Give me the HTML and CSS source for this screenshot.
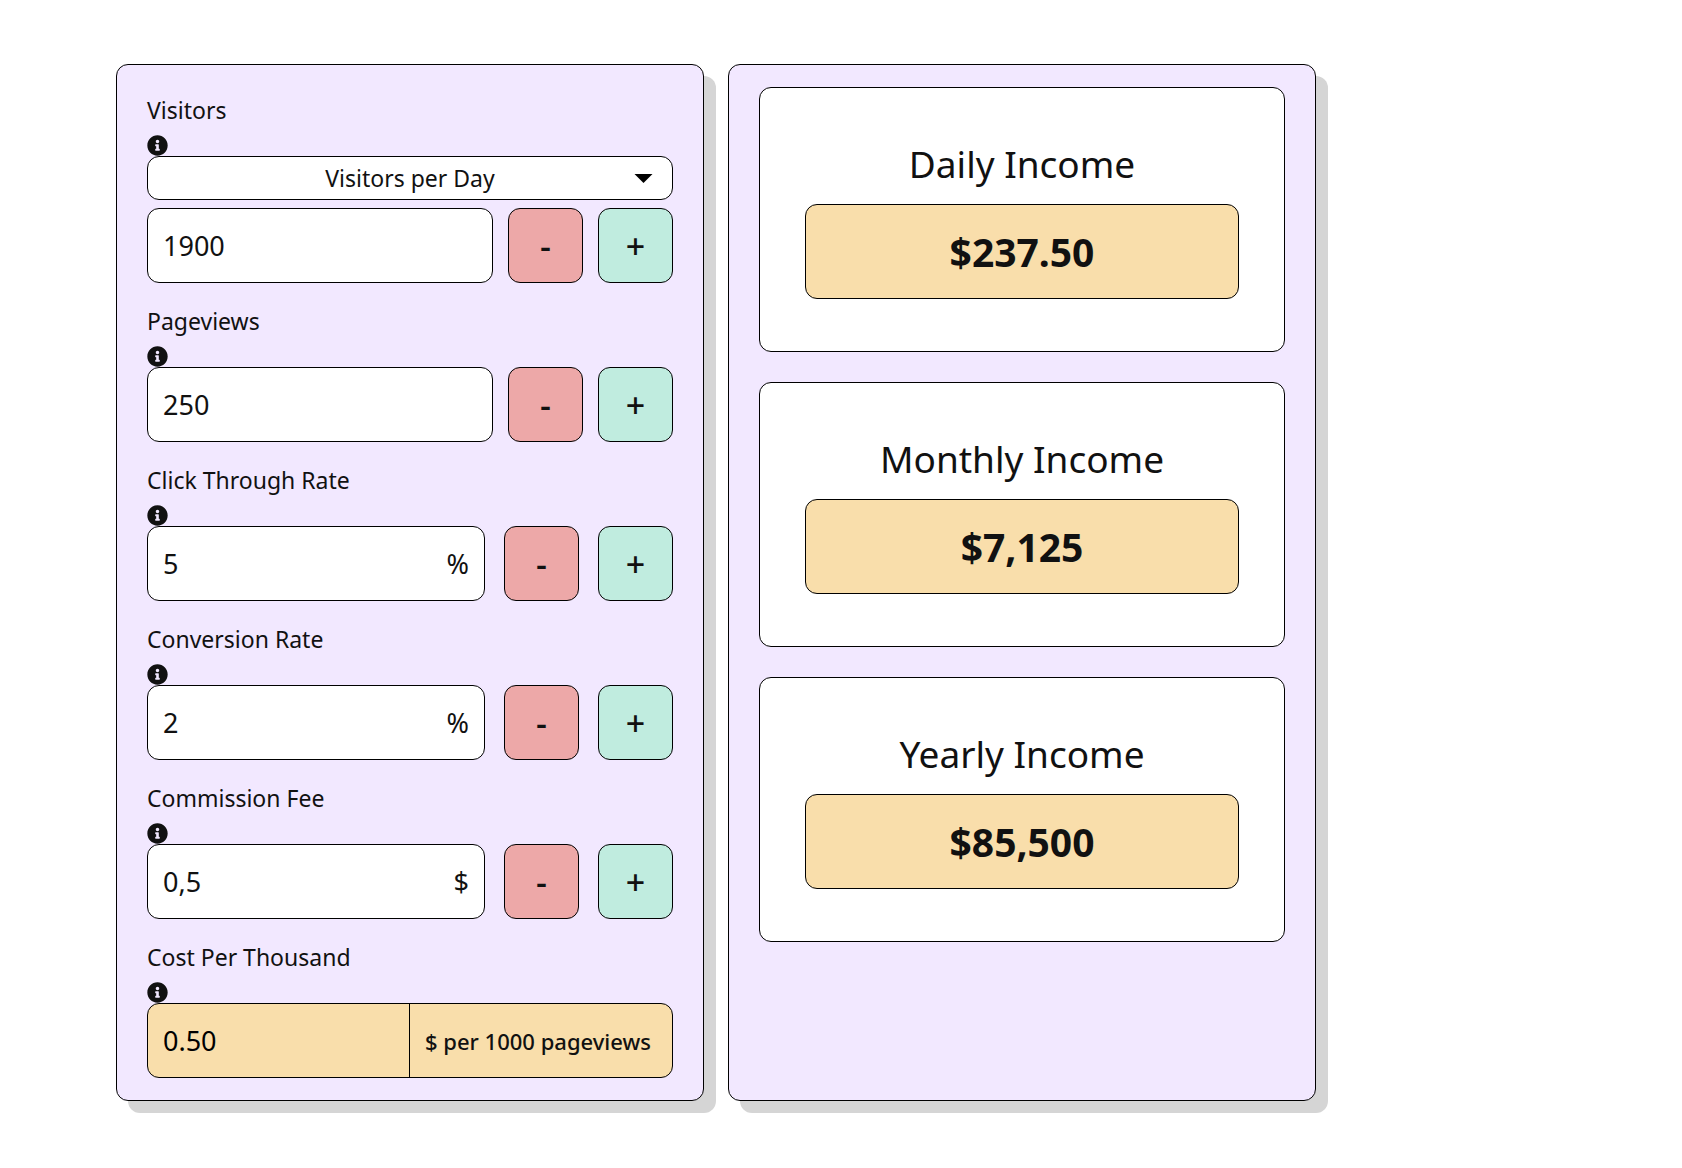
FILE: index.html
```html
<!DOCTYPE html>
<html lang="en">
<head>
    <meta charset="UTF-8">
    <meta name="viewport" content="width=device-width, initial-scale=1.0">
    <title>Income Calculator</title>

    <!-- css file link -->
    <link rel="stylesheet" href="styles.css">
</head>
<body>

    <!-- info icon, reused by every field -->
    <svg class="icon-defs" aria-hidden="true">
        <symbol id="info" viewBox="0 0 512 512">
            <path d="M256 8C119 8 8 119 8 256s111 248 248 248 248-111 248-248S393 8 256 8zm0 110c23 0 42 19 42 42s-19 42-42 42-42-19-42-42 19-42 42-42zm56 254c0 7-5 12-12 12h-88c-7 0-12-5-12-12v-24c0-7 5-12 12-12h12v-64h-12c-7 0-12-5-12-12v-24c0-7 5-12 12-12h64c7 0 12 5 12 12v100h12c7 0 12 5 12 12v24z"/>
        </symbol>
    </svg>

    <main class="calculator">
        <!-- input panel -->
        <form class="panel form">
            <div class="field">
                <label class="label" for="visitors">Visitors</label>
                <svg class="info"><use href="#info"/></svg>
                <div class="select">
                    <select id="period" aria-label="Visitors period">
                        <option>Visitors per Day</option>
                        <option>Visitors per Month</option>
                    </select>
                    <svg class="arrow" viewBox="0 0 18 9"><path d="M0 0h18L9 9z"/></svg>
                </div>
                <div class="row">
                    <input class="box" type="text" id="visitors" value="1900">
                    <button type="button" class="step minus">-</button>
                    <button type="button" class="step plus">+</button>
                </div>
            </div>

            <div class="field">
                <label class="label" for="pageviews">Pageviews</label>
                <svg class="info"><use href="#info"/></svg>
                <div class="row">
                    <input class="box" type="text" id="pageviews" value="250">
                    <button type="button" class="step minus">-</button>
                    <button type="button" class="step plus">+</button>
                </div>
            </div>

            <div class="field">
                <label class="label" for="ctr">Click Through Rate</label>
                <svg class="info"><use href="#info"/></svg>
                <div class="row wide">
                    <div class="box unit-box">
                        <input type="text" id="ctr" value="5">
                        <span>%</span>
                    </div>
                    <button type="button" class="step minus">-</button>
                    <button type="button" class="step plus">+</button>
                </div>
            </div>

            <div class="field">
                <label class="label" for="conversion">Conversion Rate</label>
                <svg class="info"><use href="#info"/></svg>
                <div class="row wide">
                    <div class="box unit-box">
                        <input type="text" id="conversion" value="2">
                        <span>%</span>
                    </div>
                    <button type="button" class="step minus">-</button>
                    <button type="button" class="step plus">+</button>
                </div>
            </div>

            <div class="field">
                <label class="label" for="fee">Commission Fee</label>
                <svg class="info"><use href="#info"/></svg>
                <div class="row wide">
                    <div class="box unit-box">
                        <input type="text" id="fee" value="0,5">
                        <span>$</span>
                    </div>
                    <button type="button" class="step minus">-</button>
                    <button type="button" class="step plus">+</button>
                </div>
            </div>

            <div class="field">
                <label class="label" for="cpm">Cost Per Thousand</label>
                <svg class="info"><use href="#info"/></svg>
                <div class="cpm">
                    <input type="text" id="cpm" value="0.50" readonly>
                    <span class="cpm-text">$ per 1000 pageviews</span>
                </div>
            </div>
        </form>

        <!-- results panel -->
        <section class="panel results">
            <div class="card">
                <h2>Daily Income</h2>
                <div class="value">$237.50</div>
            </div>
            <div class="card">
                <h2>Monthly Income</h2>
                <div class="value">$7,125</div>
            </div>
            <div class="card">
                <h2>Yearly Income</h2>
                <div class="value">$85,500</div>
            </div>
        </section>
    </main>

</body>
</html>
```
FILE: styles.css
```css
*{
    margin: 0;
    padding: 0;
    box-sizing: border-box;
}
body{
    font-family: "Noto Sans", sans-serif;
    color: #111;
    background: #fff;
}
input,select,button{
    font-family: inherit;
    color: inherit;
}
.icon-defs{
    display: none;
}
.calculator{
    display: grid;
    grid-template-columns: repeat(2, minmax(0, 1fr));
    gap: 24px;
    max-width: 1200px;
    margin: 64px 116px;
}
.panel{
    display: flex;
    flex-direction: column;
    padding: 22px 30px;
    background: #f2e8ff;
    border: 1px solid #000;
    border-radius: 12px;
    box-shadow: 12px 12px 0 #d5d5d5;
}

/* form */
.form{
    gap: 15px;
}
.label{
    display: block;
    font-size: 23px;
    line-height: 46px;
}
.info{
    display: block;
    width: 21px;
    height: 21px;
    margin-top: 2px;
    fill: #111;
}
.select{
    position: relative;
    margin-bottom: 8px;
}
.select select{
    display: block;
    width: 100%;
    height: 44px;
    font-size: 23px;
    text-align-last: center;
    background: #fff;
    border: 1px solid #000;
    border-radius: 12px;
    appearance: none;
}
.arrow{
    position: absolute;
    top: 18px;
    right: 20px;
    width: 19px;
    height: 9px;
    pointer-events: none;
}
.row{
    display: flex;
    gap: 15px;
}
.wide{
    gap: 19px;
}
.box{
    flex: 1;
    min-width: 0;
    height: 75px;
    padding: 0 15px;
    font-size: 27px;
    background: #fff;
    border: 1px solid #000;
    border-radius: 12px;
}
.unit-box{
    display: flex;
    align-items: center;
}
.unit-box input{
    flex: 1;
    min-width: 0;
    font-size: 27px;
    border: none;
    outline: none;
}
.step{
    width: 75px;
    height: 75px;
    font-size: 34px;
    font-weight: 500;
    border: 1px solid #000;
    border-radius: 12px;
    cursor: pointer;
}
.minus{
    background: #eda8a8;
}
.plus{
    background: #c0ecdf;
}
.cpm{
    display: grid;
    grid-template-columns: repeat(2, minmax(0, 1fr));
    height: 75px;
    background: #f9deab;
    border: 1px solid #000;
    border-radius: 12px;
}
.cpm input{
    min-width: 0;
    padding: 0 15px;
    font-size: 27px;
    color: #000;
    background: none;
    border: none;
    border-right: 1px solid #000;
}
.cpm-text{
    align-self: center;
    padding-left: 15px;
    font-size: 22px;
    font-weight: 500;
    white-space: nowrap;
}

/* results */
.results{
    gap: 30px;
}
.card{
    padding: 52px 45px;
    text-align: center;
    background: #fff;
    border: 1px solid #000;
    border-radius: 12px;
}
.card h2{
    margin-bottom: 16px;
    font-size: 37px;
    font-weight: 400;
    line-height: 48px;
}
.value{
    font-size: 39px;
    font-weight: 700;
    line-height: 93px;
    background: #f9deab;
    border: 1px solid #000;
    border-radius: 12px;
}
```
